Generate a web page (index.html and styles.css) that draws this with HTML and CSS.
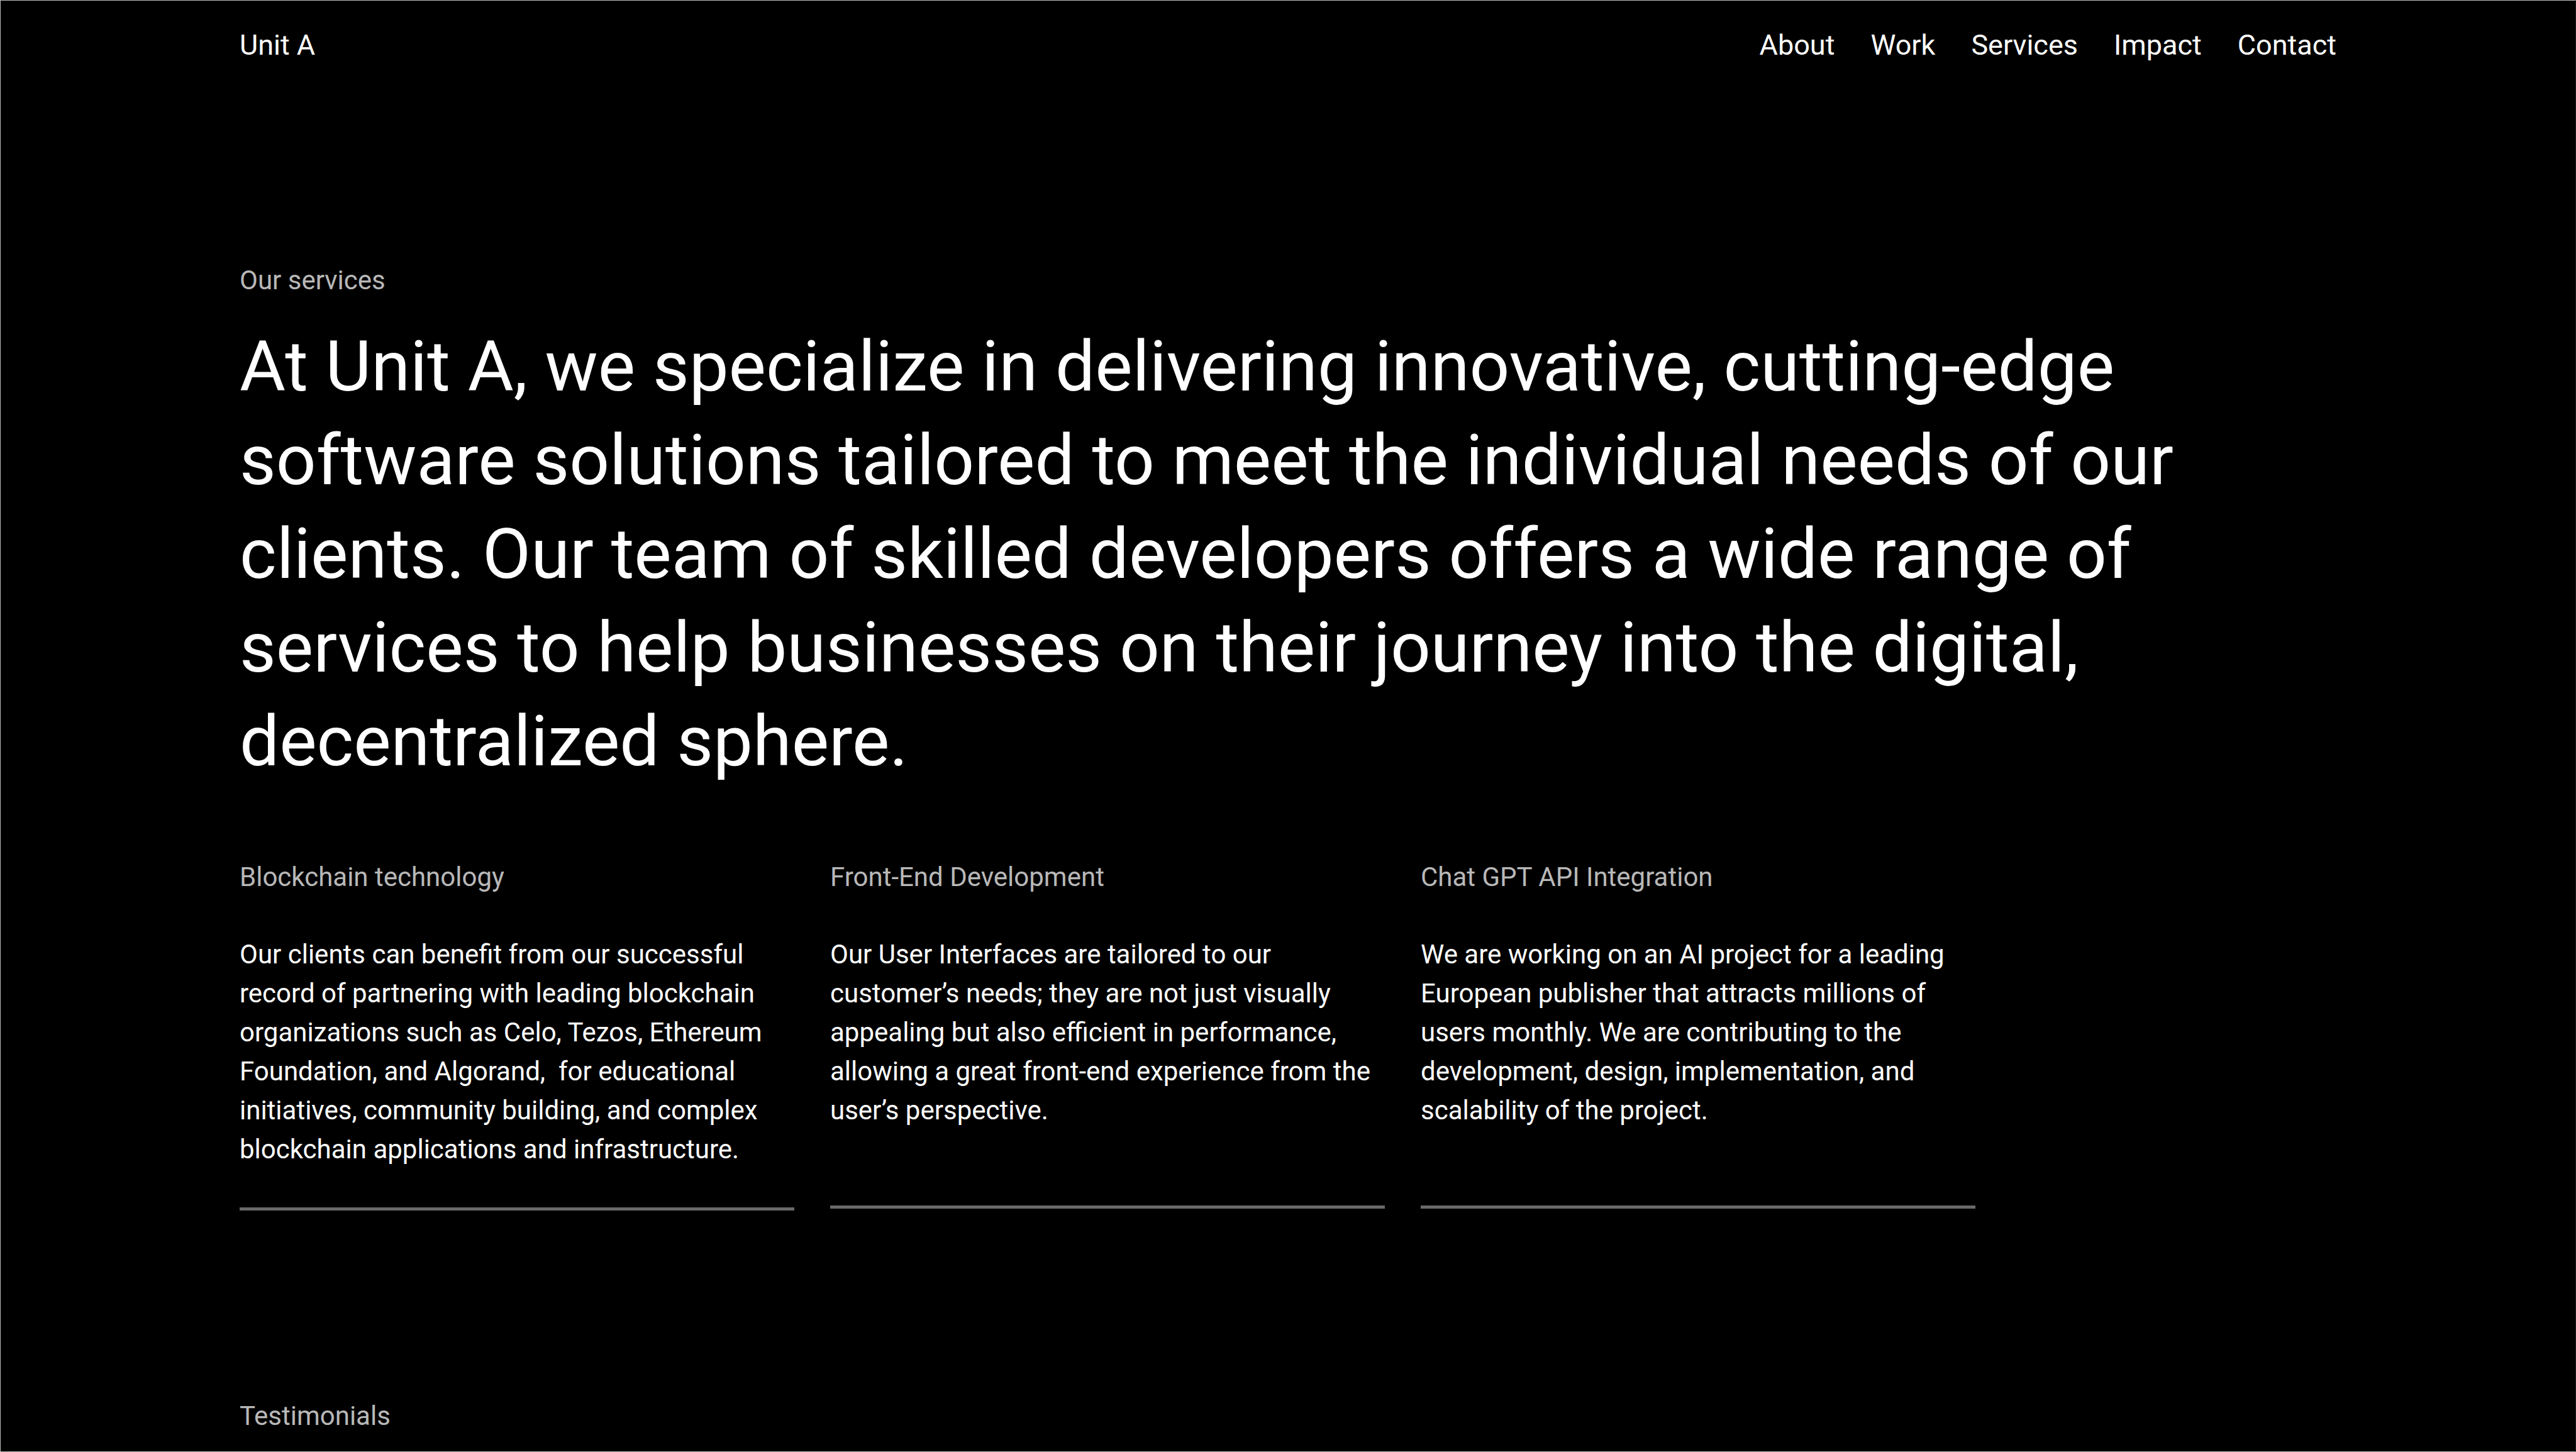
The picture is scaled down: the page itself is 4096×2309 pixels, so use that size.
FILE: index.html
```html
<!DOCTYPE html>
<html lang="en">
<head>
<meta charset="utf-8">
<title>Unit A</title>
<meta name="viewport" content="width=device-width, initial-scale=1">
<link rel="stylesheet" href="styles.css">
</head>
<body class="page">
<header class="site-header">
  <a class="brand" href="#">Unit A</a>
  <nav class="site-nav" aria-label="Main">
    <a href="#about">About</a>
    <a href="#work">Work</a>
    <a href="#services">Services</a>
    <a href="#impact">Impact</a>
    <a href="#contact">Contact</a>
  </nav>
</header>
<main class="content">
  <section class="services" id="services">
    <h2 class="label">Our services</h2>
    <p class="lead">At Unit A, we specialize in delivering innovative, cutting-edge<br>software solutions tailored to meet the individual needs of our<br>clients. Our team of skilled developers offers a wide range of<br>services to help businesses on their journey into the digital,<br>decentralized sphere.</p>
    <div class="cards">
      <article class="card">
        <h3 class="label">Blockchain technology</h3>
        <p class="card-text">Our clients can benefit from our successful<br>record of partnering with leading blockchain<br>organizations such as Celo, Tezos, Ethereum<br>Foundation, and Algorand, &nbsp;for educational<br>initiatives, community building, and complex<br>blockchain applications and infrastructure.</p>
      </article>
      <article class="card">
        <h3 class="label">Front-End Development</h3>
        <p class="card-text">Our User Interfaces are tailored to our<br>customer’s needs; they are not just visually<br>appealing but also efficient in performance,<br>allowing a great front-end experience from the<br>user’s perspective.</p>
      </article>
      <article class="card">
        <h3 class="label">Chat GPT API Integration</h3>
        <p class="card-text">We are working on an AI project for a leading<br>European publisher that attracts millions of<br>users monthly. We are contributing to the<br>development, design, implementation, and<br>scalability of the project.</p>
      </article>
    </div>
  </section>
  <section class="testimonials">
    <h2 class="label">Testimonials</h2>
  </section>
</main>
</body>
</html>
```
FILE: styles.css
```css
* {
  box-sizing: border-box;
}

.page {
  margin: 0;
  min-height: 100vh;
  border: 1px solid #b8bdb8;
  border-right-color: #1c1c1a;
  background: #000;
  color: #fff;
  font-family: Roboto, "Liberation Sans", sans-serif;
  font-size: 42px;
  line-height: 62px;
}

.site-header {
  display: flex;
  justify-content: space-between;
  padding: 41px 380px 0;
  font-size: 45px;
  line-height: 60px;
}

.site-header a {
  color: inherit;
  text-decoration: none;
}

.site-nav {
  display: flex;
  gap: 57px;
}

.content {
  padding: 313px 380px 0;
}

.label {
  margin: 0;
  color: #b8b8b8;
  font-size: 42px;
  font-weight: 400;
  line-height: 62px;
}

.lead {
  margin: 31px 0 111px;
  font-size: 112px;
  line-height: 149px;
}

.cards {
  display: grid;
  grid-template-columns: repeat(3, 1fr);
  align-items: start;
  gap: 57px;
  max-width: 2760px;
}

.card {
  min-height: 558px;
  padding-bottom: 61px;
  border-bottom: 5px solid #696969;
}

.card-text {
  margin: 61px 0 0;
}

.testimonials {
  padding: 296px 0 22px;
}
```
